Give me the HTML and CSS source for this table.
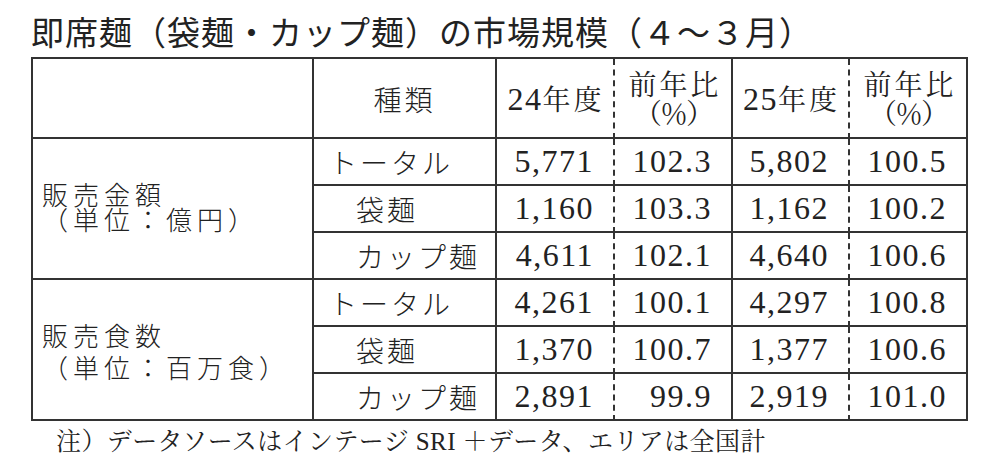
FILE: index.html
```html
<!DOCTYPE html>
<html lang="ja">
<head>
<meta charset="utf-8">
<title>即席麺の市場規模</title>
<link rel="stylesheet" href="styles.css">
</head>
<body>
<h1 class="title">即席麺（袋麺・カップ麺）の市場規模（４〜３月）</h1>
<table class="market">
  <colgroup>
    <col class="w-label">
    <col class="w-kind">
    <col class="w-num">
    <col class="w-num">
    <col class="w-num2">
    <col class="w-num">
  </colgroup>
  <thead>
    <tr class="head">
      <th class="blank"></th>
      <th class="kind-h">種類</th>
      <th class="year dash"><span class="n">24</span>年度</th>
      <th class="ratio"><span class="r1">前年比</span><span class="r2">（％）</span></th>
      <th class="year dash"><span class="n">25</span>年度</th>
      <th class="ratio"><span class="r1">前年比</span><span class="r2">（％）</span></th>
    </tr>
  </thead>
  <tbody>
    <tr>
      <td class="label tight" rowspan="3"><span class="l1">販売金額</span><span class="l2">（単位：億円）</span></td>
      <td class="kind">トータル</td>
      <td class="num dash">5,771</td>
      <td class="num">102.3</td>
      <td class="num dash">5,802</td>
      <td class="num">100.5</td>
    </tr>
    <tr>
      <td class="kind sub">袋麺</td>
      <td class="num dash">1,160</td>
      <td class="num">103.3</td>
      <td class="num dash">1,162</td>
      <td class="num">100.2</td>
    </tr>
    <tr>
      <td class="kind sub">カップ麺</td>
      <td class="num dash">4,611</td>
      <td class="num">102.1</td>
      <td class="num dash">4,640</td>
      <td class="num">100.6</td>
    </tr>
    <tr>
      <td class="label loose" rowspan="3"><span class="l1">販売食数</span><span class="l2">（単位：百万食）</span></td>
      <td class="kind">トータル</td>
      <td class="num dash">4,261</td>
      <td class="num">100.1</td>
      <td class="num dash">4,297</td>
      <td class="num">100.8</td>
    </tr>
    <tr>
      <td class="kind sub">袋麺</td>
      <td class="num dash">1,370</td>
      <td class="num">100.7</td>
      <td class="num dash">1,377</td>
      <td class="num">100.6</td>
    </tr>
    <tr>
      <td class="kind sub">カップ麺</td>
      <td class="num dash">2,891</td>
      <td class="num">99.9</td>
      <td class="num dash">2,919</td>
      <td class="num">101.0</td>
    </tr>
  </tbody>
</table>
<p class="note">注）データソースはインテージ SRI ＋データ、エリアは全国計</p>
</body>
</html>
```

FILE: styles.css
```css
html, body {
  margin: 0;
  padding: 0;
  background: #ffffff;
  color: #222222;
}

body {
  width: 1000px;
  height: 472px;
  overflow: hidden;
  font-family: "Noto Sans CJK JP", sans-serif;
}

.title {
  margin: 0 0 9px 31px;
  padding-top: 15px;
  font-size: 33px;
  line-height: 33px;
  font-weight: 400;
  letter-spacing: 1px;
  white-space: nowrap;
  color: #222222;
}

.market {
  margin-left: 31px;
  width: 937px;
  table-layout: fixed;
  border-collapse: separate;
  border-spacing: 0;
  border-top: 2px solid #333333;
  border-left: 2px solid #333333;
}

.w-label { width: 281px; }
.w-kind { width: 183px; }
.w-num { width: 118px; }
.w-num2 { width: 117px; }

.market th,
.market td {
  box-sizing: border-box;
  padding: 0;
  border-right: 2px solid #333333;
  border-bottom: 2px solid #333333;
  font-weight: 400;
  white-space: nowrap;
}

.market .dash {
  border-right-style: dashed;
}

.market .head th {
  height: 80px;
  text-align: center;
  vertical-align: middle;
  font-size: 28px;
  letter-spacing: 3px;
}

.market .kind-h {
  font-family: "Noto Sans CJK JP", sans-serif;
  font-weight: 300;
  padding-top: 2px;
}

.market .year,
.market .ratio {
  font-family: "Noto Serif CJK JP", "Noto Sans CJK JP", serif;
}

.market .year {
  line-height: 36px;
  padding-left: 2px;
}

.market .ratio {
  font-size: 27px;
  letter-spacing: 4px;
  padding-left: 4px;
}

.r1,
.r2 {
  display: block;
  height: 29px;
  line-height: 29px;
}

.r2 {
  letter-spacing: -2px;
  padding-right: 4px;
}

.n {
  font-family: "Liberation Serif", serif;
  font-size: 32px;
  letter-spacing: 1.5px;
}

.market tbody td {
  height: 47px;
  vertical-align: middle;
}

.market .label {
  font-family: "Noto Sans CJK JP", sans-serif;
  font-weight: 300;
  font-size: 26px;
  letter-spacing: 5px;
  padding-left: 9px;
  text-align: left;
}

.l1,
.l2 {
  display: block;
  white-space: nowrap;
}

.tight .l1,
.tight .l2 {
  height: 25px;
  line-height: 25px;
}

.market .tight {
  padding-bottom: 5px;
}

.loose .l1,
.loose .l2 {
  height: 32px;
  line-height: 32px;
}

.market .loose {
  padding-top: 2px;
}

.market .kind {
  font-family: "Noto Sans CJK JP", sans-serif;
  font-weight: 300;
  font-size: 28px;
  letter-spacing: 3px;
  padding-left: 15px;
  text-align: left;
}

.market .kind.sub {
  padding-left: 42px;
}

.market .num {
  font-family: "Liberation Serif", serif;
  font-size: 32px;
  letter-spacing: 1.5px;
  text-align: right;
  padding-right: 19px;
}

.note {
  margin: 8px 0 0 56px;
  font-family: "Liberation Serif", "Noto Serif CJK JP", "Noto Sans CJK JP", serif;
  font-size: 25px;
  line-height: 25px;
  letter-spacing: 0.4px;
  white-space: nowrap;
  color: #222222;
}
```
